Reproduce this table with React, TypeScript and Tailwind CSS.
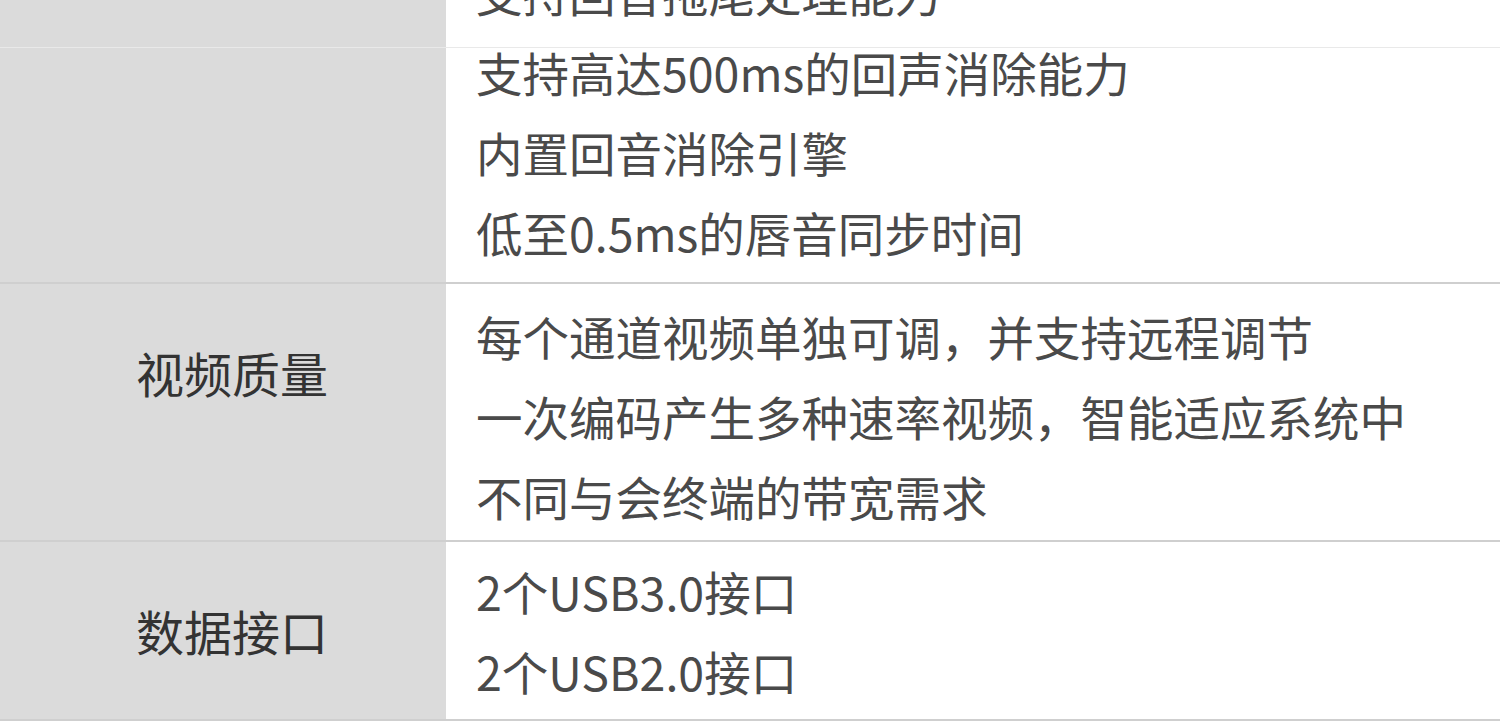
import React from 'react';

type Row = {
  label?: string;
  items: string[];
};

const rows: Row[] = [
  {
    items: ['支持回音拖尾处理能力', '支持高达500ms的回声消除能力', '内置回音消除引擎', '低至0.5ms的唇音同步时间'],
  },
  {
    label: '视频质量',
    items: ['每个通道视频单独可调，并支持远程调节', '一次编码产生多种速率视频，智能适应系统中', '不同与会终端的带宽需求'],
  },
  {
    label: '数据接口',
    items: ['2个USB3.0接口', '2个USB2.0接口'],
  },
];

export default function App() {
  return (
    <div
      className="h-[721px] w-full overflow-hidden bg-white"
      style={{ fontFamily: '"Noto Sans CJK SC", "Noto Sans", sans-serif' }}
    >
      <div className="-mt-[48px]">
        {/* Audio section, top cut off */}
        <div className="relative flex border-b-2 border-[#cfcfcf]">
          <div className="w-[446px] shrink-0 bg-[#dbdbdb]" />
          <div className="flex-1 pl-[30px] pb-[10px] text-[46.5px] leading-[80px] text-[#4a4a4a]">
            {rows[0].items.map((t) => (
              <div key={t}>{t}</div>
            ))}
          </div>
          {/* faint seam */}
          <div className="absolute left-0 right-0 top-[95px] h-px bg-[#e9e9e9]" />
        </div>

        {rows.slice(1).map((row, i) => (
          <div key={row.label} className="flex border-b-2 border-[#cfcfcf]">
            <div className="w-[446px] shrink-0 bg-[#dbdbdb] pl-[18px] pt-[48px] text-center text-[48px] leading-[80px] text-[#333]">
              {row.label}
            </div>
            <div
              className={
                i === 0
                  ? 'flex-1 pl-[30px] pt-[12px] pb-[4px] text-[46.5px] leading-[80px] text-[#4a4a4a]'
                  : 'flex-1 pl-[30px] pt-[9px] pb-[8px] text-[46.5px] leading-[80px] text-[#4a4a4a]'
              }
            >
              {row.items.map((t) => (
                <div key={t}>{t}</div>
              ))}
            </div>
          </div>
        ))}
      </div>
    </div>
  );
}
